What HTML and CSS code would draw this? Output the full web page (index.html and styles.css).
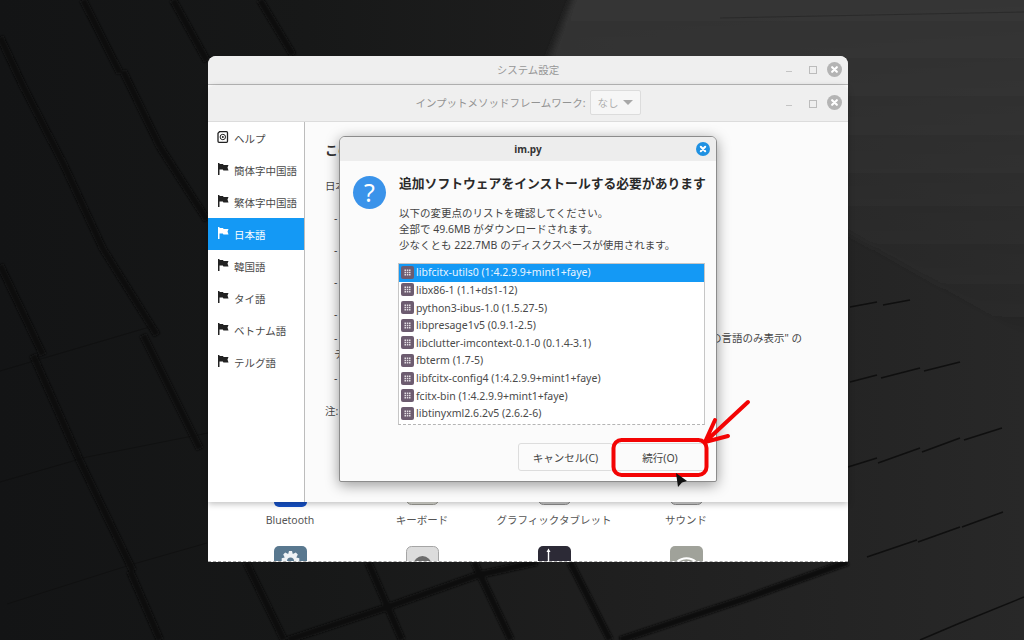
FILE: index.html
```html
<!DOCTYPE html>
<html lang="ja">
<head>
  <meta charset="UTF-8">
  <title>システム設定</title>
  <link rel="stylesheet" href="styles.css">
</head>
<body>

<svg class="defs" width="0" height="0">
  <symbol id="flag" viewBox="0 0 12 12">
    <path fill="currentColor" d="M1 0h1.5v12H1zM2.500 1H6l.6 1h4.900l-1 2.600 1 2.900H6.400l-.6-1H2.500z"/>
  </symbol>
  <symbol id="pkg" viewBox="0 0 13 13">
    <rect width="13" height="13" rx="2" fill="#6d5c70"/>
    <path fill="#e4dfe4" d="M3.500 3.500h1.500V5H3.500zM5.800 3.500h1.500V5H5.800zM8 3.500h1.500V5H8zM3.500 5.800h1.500v1.500H3.500zM5.800 5.800h1.500v1.500H5.800zM8 5.800h1.500v1.500H8zM3.500 8h1.500v1.500H3.500zM5.800 8h1.500v1.500H5.800zM8 8h1.500v1.500H8z"/>
  </symbol>
  <symbol id="close" viewBox="0 0 14 14">
    <circle cx="7" cy="7" r="7" fill="currentColor"/>
    <path stroke="#fff" stroke-width="2" stroke-linecap="round" d="M4.800 4.800l4.400 4.400M9.200 4.800l-4.400 4.400"/>
  </symbol>
</svg>

<div class="desktop">

  <!-- wallpaper: dark blocks with gaps between them -->
  <svg class="wallpaper" width="1024" height="640" viewBox="0 0 1024 640">
    <defs>
      <linearGradient id="base" x1="0" x2="1" y1="0" y2="0">
        <stop offset="0" stop-color="#131415"/>
        <stop offset="0.3" stop-color="#171818"/>
        <stop offset="0.6" stop-color="#1f1f1f"/>
        <stop offset="1" stop-color="#282828"/>
      </linearGradient>
      <linearGradient id="glow" x1="0" x2="0" y1="0" y2="1">
        <stop offset="0" stop-color="#363636"/>
        <stop offset="1" stop-color="#363636" stop-opacity="0"/>
      </linearGradient>
      <filter id="soft"><feGaussianBlur stdDeviation="1.200"/></filter>
      <filter id="softer"><feGaussianBlur stdDeviation="3"/></filter>
    </defs>
    <rect width="1024" height="640" fill="url(#base)"/>
    <polygon points="576,-10 548,60 1034,340 1034,-10" fill="url(#glow)" filter="url(#softer)"/>
    <g class="gaps" filter="url(#soft)">
      <path d="M83 0L120 73M123 71L160 147M160 147L207 220"/>
      <path d="M0 37L23 86M23 86L63 163M63 163L103 249M103 249L157 335M143 335L200 449"/>
      <path d="M0 265L43 355M33 355L80 461M80 461L133 571M130 571L160 640"/>
      <path d="M173 0L207 61M260 0L293 55"/>
      <path d="M246 562L284 640M368 562L402 640M474 562L511 640M570 562L610 640"/>
      <path d="M288 640L385 608L478 575L537 562"/>
      <path d="M620 640L747 598L848 562"/>
    </g>
    <g class="seams">
      <path class="faint" d="M0 371L153 326M0 482L87 457L208 433M7 604L130 565L207 543"/>
      <path class="faint-top" d="M720 18L1024 12"/>
      <path d="M850 307L877 302M883 305L910 300"/>
      <path d="M850 382L877 375M881 378L920 368M924 371L960 362"/>
      <path d="M848 467L877 458M878 463L920 448M922 452L960 438M964 440L1002 428"/>
      <path d="M867 557L917 540M918 542L960 527M962 527L1003 512"/>
      <path d="M920 640L960 623L1024 597"/>
    </g>
  </svg>

  <!-- system settings, sits behind everything else -->
  <div class="win win-back">
    <div class="titlebar titlebar-back">
      <span></span>
      <span class="win-title">システム設定</span>
      <div class="controls">
        <span class="ctl-min"></span>
        <span class="ctl-max"></span>
        <svg class="ctl-close"><use href="#close"/></svg>
      </div>
    </div>
    <div class="applets">
      <div class="applet">
        <svg class="applet-icon" viewBox="0 0 33 33"><rect width="33" height="33" rx="5" fill="#1650c4"/></svg>
        <span>Bluetooth</span>
      </div>
      <div class="applet">
        <svg class="applet-icon" viewBox="0 0 33 33"><rect x=".5" y=".5" width="32" height="30" rx="5" fill="#d9d9d2" stroke="#9a9a94"/></svg>
        <span>キーボード</span>
      </div>
      <div class="applet">
        <svg class="applet-icon" viewBox="0 0 33 33"><rect x=".5" y=".5" width="32" height="30" rx="5" fill="#c9c9c9" stroke="#8e8e8e"/></svg>
        <span>グラフィックタブレット</span>
      </div>
      <div class="applet">
        <svg class="applet-icon" viewBox="0 0 33 33"><rect x=".5" y=".5" width="32" height="30" rx="5" fill="#cfcfcf" stroke="#8e8e8e"/></svg>
        <span>サウンド</span>
      </div>
      <div class="applet">
        <svg class="applet-icon" viewBox="0 0 33 33">
          <rect width="33" height="33" rx="5" fill="#59788f"/>
          <path fill="#eef2f5" d="M15 5h3l.8 3 3-1.500 2 2-1.500 3 3 .8v3l-3 .8 1.500 3-2 2-3-1.500-.8 3h-3l-.8-3-3 1.500-2-2 1.500-3-3-.8v-3l3-.8-1.500-3 2-2 3 1.500z"/>
          <circle cx="16.500" cy="15" r="3.500" fill="#59788f"/>
        </svg>
      </div>
      <div class="applet">
        <svg class="applet-icon" viewBox="0 0 33 33">
          <rect x=".5" y=".5" width="32" height="32" rx="5" fill="#dcdcdc" stroke="#a5a5a5"/>
          <circle cx="16.500" cy="19" r="9" fill="#6c6c6c"/>
          <circle cx="16.500" cy="19" r="3" fill="#9a9a9a"/>
        </svg>
      </div>
      <div class="applet">
        <svg class="applet-icon" viewBox="0 0 33 33">
          <rect width="33" height="33" rx="5" fill="#2c2a36"/>
          <path fill="none" stroke="#fff" stroke-width="1.400" d="M10.500 5v14"/>
          <path fill="#fff" d="M10.500 2.500l2 3.500h-4z"/>
        </svg>
      </div>
      <div class="applet">
        <svg class="applet-icon" viewBox="0 0 33 33">
          <rect width="33" height="33" rx="5" fill="#a0a29a"/>
          <path fill="none" stroke="#fff" stroke-width="2" d="M6 17a14 14 0 0 1 21 0M10 20a9 9 0 0 1 13 0"/>
        </svg>
      </div>
    </div>
  </div>

  <!-- input method window -->
  <div class="win win-main">
    <div class="titlebar titlebar-main">
      <span></span>
      <div class="framework">
        <span>インプットメソッドフレームワーク:</span>
        <div class="combo">なし<i class="combo-arrow"></i></div>
      </div>
      <div class="controls">
        <span class="ctl-min"></span>
        <span class="ctl-max"></span>
        <svg class="ctl-close"><use href="#close"/></svg>
      </div>
    </div>
    <div class="main-body">
      <ul class="sidebar">
        <li>
          <svg class="side-icon" viewBox="0 0 12 12">
            <path d="M2.500 .7H9.500a1 1 0 0 1 1 1v8.600a1 1 0 0 1-1 1H2a1 1 0 0 1-1-1V2.200z" fill="none" stroke="#222" stroke-width="1.300"/>
            <circle cx="5.800" cy="6" r="2.700" fill="none" stroke="#222"/>
            <circle cx="5.800" cy="6" r="1" fill="#222"/>
          </svg>
          ヘルプ
        </li>
        <li><svg class="side-icon"><use href="#flag"/></svg>簡体字中国語</li>
        <li><svg class="side-icon"><use href="#flag"/></svg>繁体字中国語</li>
        <li class="selected"><svg class="side-icon"><use href="#flag"/></svg>日本語</li>
        <li><svg class="side-icon"><use href="#flag"/></svg>韓国語</li>
        <li><svg class="side-icon"><use href="#flag"/></svg>タイ語</li>
        <li><svg class="side-icon"><use href="#flag"/></svg>ベトナム語</li>
        <li><svg class="side-icon"><use href="#flag"/></svg>テルグ語</li>
      </ul>
      <div class="content">
        <h2 class="content-head">この言語</h2>
        <p class="line-intro">日本語</p>
        <p class="note">-</p>
        <p class="note">-</p>
        <p class="note">-</p>
        <p class="note">-</p>
        <p class="note tight split"><span>-</span><span>の言語のみ表示" の</span></p>
        <p class="note-cont">テ</p>
        <p class="note tight">-</p>
        <p class="note remark">注:</p>
      </div>
    </div>
  </div>

  <div class="dialog">
    <div class="dialog-head">
      <span></span>
      <span class="dialog-title">im.py</span>
      <svg class="dialog-close"><use href="#close"/></svg>
    </div>
    <div class="dialog-body">
      <div class="question">?</div>
      <div class="dialog-main">
        <h1>追加ソフトウェアをインストールする必要があります</h1>
        <p class="summary">以下の変更点のリストを確認してください。<br>全部で 49.6MB がダウンロードされます。<br>少なくとも 222.7MB のディスクスペースが使用されます。</p>
        <ul class="packages">
          <li class="selected"><svg class="pkg"><use href="#pkg"/></svg>libfcitx-utils0 (1:4.2.9.9+mint1+faye)</li>
          <li><svg class="pkg"><use href="#pkg"/></svg>libx86-1 (1.1+ds1-12)</li>
          <li><svg class="pkg"><use href="#pkg"/></svg>python3-ibus-1.0 (1.5.27-5)</li>
          <li><svg class="pkg"><use href="#pkg"/></svg>libpresage1v5 (0.9.1-2.5)</li>
          <li><svg class="pkg"><use href="#pkg"/></svg>libclutter-imcontext-0.1-0 (0.1.4-3.1)</li>
          <li><svg class="pkg"><use href="#pkg"/></svg>fbterm (1.7-5)</li>
          <li><svg class="pkg"><use href="#pkg"/></svg>libfcitx-config4 (1:4.2.9.9+mint1+faye)</li>
          <li><svg class="pkg"><use href="#pkg"/></svg>fcitx-bin (1:4.2.9.9+mint1+faye)</li>
          <li><svg class="pkg"><use href="#pkg"/></svg>libtinyxml2.6.2v5 (2.6.2-6)</li>
        </ul>
      </div>
    </div>
    <div class="dialog-buttons">
      <button class="btn-cancel">キャンセル(C)</button>
      <button>続行(O)</button>
    </div>
  </div>

  <!-- red marker drawn on top, plus the mouse pointer -->
  <svg class="overlay" width="1024" height="640" viewBox="0 0 1024 640">
    <rect class="mark" x="613.500" y="440" width="93" height="35" rx="8"/>
    <path class="mark" d="M748 402L705 442M715 420L705 442L728 436"/>
    <path d="M676 473L687 481L682 482.500L678 487z" fill="#111"/>
  </svg>

</div>

</body>
</html>
```

FILE: styles.css
```css
* {
  box-sizing: border-box;
}

html, body {
  margin: 0;
  height: 100%;
  background: #151515;
}

body {
  font-family: "Noto Sans", "Noto Sans CJK JP", sans-serif;
  font-size: 10.5px;
  color: #444;
}

ul {
  list-style: none;
  margin: 0;
  padding: 0;
}

p, h1, h2 {
  margin: 0;
}

.defs {
  position: absolute;
}

.desktop {
  position: relative;
  width: 1024px;
  height: 640px;
  overflow: hidden;
}

.wallpaper, .overlay {
  position: absolute;
  left: 0;
  top: 0;
}

.gaps path {
  fill: none;
  stroke: #0d0d0d;
  stroke-width: 7;
}

.seams path {
  fill: none;
  stroke: #0f0f0f;
  stroke-width: 1.500;
}

.seams .faint {
  stroke: #0e0e0e;
  stroke-width: 1;
  opacity: 0.6;
}

.seams .faint-top {
  stroke: #2a2a2a;
  stroke-width: 1;
}

.mark {
  fill: none;
  stroke: #f30404;
  stroke-width: 4;
  stroke-linecap: round;
  stroke-linejoin: round;
}

/* windows */
.win {
  position: absolute;
  width: 640px;
  overflow: hidden;
  border-radius: 8px 8px 0 0;
}

.win-back {
  left: 208px;
  top: 56px;
  height: 506px;
  background: #fff;
  border-bottom: 1px dashed #aaa;
}

.win-main {
  left: 208px;
  top: 85px;
  height: 417px;
  background: #fbfbfb;
  box-shadow: 0 2px 6px rgba(0,0,0,0.25);
  overflow: visible;
}

.titlebar {
  display: grid;
  grid-template-columns: 1fr auto 1fr;
  align-items: center;
  background: #efefef;
  padding: 0 6px;
  border-radius: 8px 8px 0 0;
}

.titlebar-back {
  height: 29px;
  border-bottom: 1px solid #b9b9b9;
  padding-bottom: 2px;
}

.titlebar-main {
  height: 37px;
  border-bottom: 1px solid #dcdcdc;
  padding-bottom: 1px;
}

.win-title {
  color: #979797;
}

.controls {
  justify-self: end;
  display: flex;
  align-items: center;
  gap: 8px;
  color: #b4b4b4;
}

.ctl-min, .ctl-max {
  position: relative;
  width: 14px;
  height: 14px;
}

.ctl-min::after {
  content: "";
  position: absolute;
  left: 3px;
  top: 9px;
  width: 6px;
  height: 1px;
  background: #c4c4c4;
}

.ctl-max::after {
  content: "";
  position: absolute;
  left: 4px;
  top: 4px;
  width: 6px;
  height: 6px;
  border: 1px solid #bcbcbc;
}

.ctl-close {
  width: 15px;
  height: 15px;
}

.framework {
  display: flex;
  align-items: center;
  gap: 4px;
  color: #939393;
}

.combo {
  display: flex;
  align-items: center;
  justify-content: center;
  gap: 4px;
  width: 51px;
  height: 25px;
  background: #f6f6f6;
  border: 1px solid #dcdcdc;
  border-radius: 2px;
  color: #b0b0b0;
}

.combo-arrow {
  width: 0;
  height: 0;
  border-left: 5px solid transparent;
  border-right: 5px solid transparent;
  border-top: 5px solid #a8a8a8;
}

/* applet grid of the settings window */
.applets {
  display: grid;
  grid-template-columns: repeat(4, 132px);
  grid-auto-rows: 72px;
  padding: 389px 0 0 16px;
}

.applet {
  display: flex;
  flex-direction: column;
  align-items: center;
  color: #555;
  line-height: 16px;
}

.applet-icon {
  width: 33px;
  height: 33px;
  flex: none;
  margin-bottom: 5px;
}

.main-body {
  display: flex;
  height: 380px;
}

.sidebar {
  width: 97px;
  flex: none;
  background: #fff;
  border-right: 1px solid #bcbcbc;
}

.sidebar li {
  display: flex;
  align-items: center;
  height: 32px;
  padding-left: 9px;
  color: #4a4a4a;
}

.sidebar li.selected {
  background: #1499f5;
  color: #fff;
}

.side-icon {
  width: 12px;
  height: 12px;
  margin-right: 5px;
  margin-top: -3px;
  color: #222;
  flex: none;
}

.selected .side-icon {
  color: #fff;
}

.content {
  flex: 1;
  padding: 19px 46px 0 20px;
  line-height: 16px;
}

.content-head {
  font-size: 13px;
  line-height: 18px;
  color: #333;
}

.line-intro {
  margin: 19px 0 1px;
}

.note {
  margin-top: 16px;
  padding-left: 9px;
}

.note.remark {
  margin-top: 17px;
  padding-left: 0;
}

.note.tight {
  margin-top: 8px;
}

.note.split {
  display: flex;
  justify-content: space-between;
}

.note-cont {
  padding-left: 9px;
}

/* confirmation dialog */
.dialog {
  position: absolute;
  left: 339px;
  top: 136px;
  width: 378px;
  height: 346px;
  background: #fbfbfb;
  border: 1px solid #8c8c8c;
  border-radius: 6px 6px 2px 2px;
  box-shadow: 0 3px 14px rgba(0,0,0,0.4);
}

.dialog-head {
  display: grid;
  grid-template-columns: 1fr auto 1fr;
  align-items: center;
  height: 24px;
  padding: 0 6px;
  background: #ededed;
  border-radius: 5px 5px 0 0;
}

.dialog-title {
  font-weight: bold;
  font-size: 10px;
  color: #333;
}

.dialog-close {
  justify-self: end;
  width: 14px;
  height: 14px;
  color: #1f91e2;
}

.dialog-body {
  display: flex;
  padding: 13px 11px 0 13px;
}

.question {
  flex: none;
  width: 33px;
  height: 33px;
  margin: 2px 13px 0 0;
  border-radius: 50%;
  background: #3a93ea;
  color: #fff;
  font-size: 25px;
  line-height: 33px;
  text-align: center;
}

.dialog-main {
  flex: 1;
  min-width: 0;
}

.dialog-main h1 {
  font-size: 12.800px;
  line-height: 18px;
  font-weight: bold;
  color: #2a2a2a;
  white-space: nowrap;
}

.summary {
  margin-top: 13px;
  line-height: 16px;
  color: #444;
}

.packages {
  margin: 10px 0 0 -1px;
  width: 307px;
  height: 162px;
  overflow: hidden;
  background: #fff;
  border: 1px solid #c6c6c6;
  border-bottom: 1px dashed #b4b4b4;
}

.packages li {
  display: flex;
  align-items: center;
  height: 17.625px;
  padding: 0 0 1px 2px;
  color: #4a4a4a;
  white-space: nowrap;
}

.packages li.selected {
  background: #1499f5;
  color: #e8f4ff;
}

.pkg {
  width: 13px;
  height: 13px;
  margin-right: 2px;
  flex: none;
}

.dialog-buttons {
  display: flex;
  justify-content: flex-end;
  margin-top: 18px;
  padding-right: 8px;
}

.dialog-buttons button {
  width: 96px;
  height: 28px;
  padding: 0;
  font: inherit;
  color: #444;
  background: #fbfbfb;
  border: 1px solid #dddddd;
  border-radius: 3px;
}

.dialog-buttons .btn-cancel {
  width: 95px;
}

.dialog-buttons button + button {
  margin-left: -1px;
}
```
